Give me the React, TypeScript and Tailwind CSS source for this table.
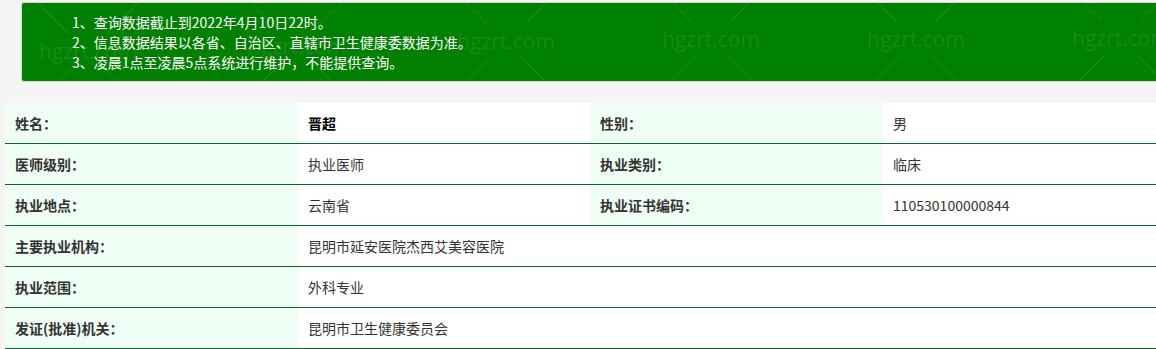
import React from 'react';

const notices = [
  '1、查询数据截止到2022年4月10日22时。',
  '2、信息数据结果以各省、自治区、直辖市卫生健康委数据为准。',
  '3、凌晨1点至凌晨5点系统进行维护，不能提供查询。',
];

// watermark centres, in banner coordinates
const marks = [
  { x: 66, y: 48 },
  { x: 275, y: 43 },
  { x: 484, y: 38 },
  { x: 689, y: 36 },
  { x: 894, y: 36 },
  { x: 1099, y: 35 },
];

const Watermark: React.FC = () => (
  <svg className="absolute inset-0 pointer-events-none" width="1150" height="80">
    {marks.map((m, i) => (
      <g key={i} stroke="rgba(255,255,255,0.13)" strokeWidth="1">
        <line x1={m.x - 20} y1={m.y - 18} x2={m.x - 80} y2={m.y - 78} />
        <line x1={m.x + 20} y1={m.y - 18} x2={m.x + 80} y2={m.y - 78} />
        <line x1={m.x - 16} y1={m.y + 17} x2={m.x - 76} y2={m.y + 77} />
        <line x1={m.x + 16} y1={m.y + 17} x2={m.x + 76} y2={m.y + 77} />
        <text
          x={m.x}
          y={m.y + 8}
          textAnchor="middle"
          fontFamily="'Open Sans', sans-serif"
          fontSize="21"
          fill="rgba(255,255,255,0.1)"
          stroke="none"
        >
          hgzrt.com
        </text>
      </g>
    ))}
  </svg>
);

type Row = { label: string; value: string; label2?: string; value2?: string; bold?: boolean };

const rows: Row[] = [
  { label: '姓名：', value: '晋超', label2: '性别：', value2: '男', bold: true },
  { label: '医师级别：', value: '执业医师', label2: '执业类别：', value2: '临床' },
  { label: '执业地点：', value: '云南省', label2: '执业证书编码：', value2: '110530100000844' },
  { label: '主要执业机构：', value: '昆明市延安医院杰西艾美容医院' },
  { label: '执业范围：', value: '外科专业' },
  { label: '发证(批准)机关：', value: '昆明市卫生健康委员会' },
];

const labelCls = 'flex items-center pl-[10px] bg-[#effff6] font-bold text-[#333]';
const valueCls = 'flex items-center pl-[10px] bg-white text-[#333]';

export default function App() {
  return (
    <div className="w-[1156px] h-[349px] overflow-hidden bg-[#f5f5f5] text-[14px] font-['Noto_Sans_CJK_SC','Noto_Sans',sans-serif]">
      <div className="pt-[2px] pl-[21px]">
        <div className="relative w-[1150px] h-[80px] overflow-hidden rounded-[3px] border border-[#d9d4c8] bg-[#008000] pl-[50px] pt-[9px] text-white leading-[20px]">
          <Watermark />
          {notices.map((n) => (
            <div key={n} className="relative">{n}</div>
          ))}
        </div>
      </div>

      <div className="mt-[21px] ml-[5px] w-[1172px]">
        {rows.map((r) => (
          <div key={r.label} className="flex h-[41px] border-b border-[#0b6233]">
            <div className={`${labelCls} w-[293px]`}>{r.label}</div>
            {r.label2 ? (
              <>
                <div className={`${valueCls} w-[292px] ${r.bold ? 'font-bold text-black' : ''}`}>{r.value}</div>
                <div className={`${labelCls} w-[293px]`}>{r.label2}</div>
                <div className={`${valueCls} flex-1`}>{r.value2}</div>
              </>
            ) : (
              <div className={`${valueCls} flex-1`}>{r.value}</div>
            )}
          </div>
        ))}
      </div>
    </div>
  );
}
